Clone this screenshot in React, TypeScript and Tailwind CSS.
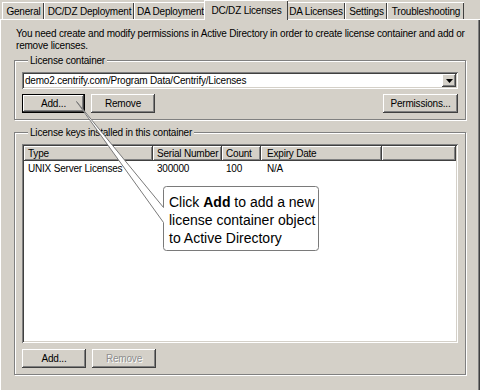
import React from 'react';
import clsx from 'clsx';

const FONT = { fontFamily: '"Liberation Sans", Arial, sans-serif' };

// classic raised 3D edge used by buttons, header cells and the combo arrow
const RAISED =
  'shadow-[inset_-1px_-1px_0_#404040,inset_1px_1px_0_#ffffff,inset_-2px_-2px_0_#808080]';
const SUNKEN =
  'shadow-[inset_1px_1px_0_#808080,inset_-1px_-1px_0_#ffffff,inset_2px_2px_0_#404040,inset_-2px_-2px_0_#d4d0c8]';

const TABS = [
  { label: 'General', w: 'w-[42px]' },
  { label: 'DC/DZ Deployment', w: 'w-[90px]' },
  { label: 'DA Deployment', w: 'w-[72px]' },
  { label: 'DC/DZ Licenses', w: 'w-[84px]', active: true },
  { label: 'DA Licenses', w: 'w-[59px]' },
  { label: 'Settings', w: 'w-[42px]' },
  { label: 'Troubleshooting', w: 'w-[77px]' },
];

const Btn: React.FC<{ children: React.ReactNode; w: string; def?: boolean; disabled?: boolean }> = ({
  children,
  w,
  def,
  disabled,
}) => (
  <div
    className={clsx(
      'flex items-center justify-center h-[19px] bg-[#d4d0c8] whitespace-nowrap',
      w,
      def ? 'border border-black ' + RAISED : RAISED,
      disabled ? 'text-[#8e8e8e] [text-shadow:1px_1px_0_#ffffff]' : 'text-black'
    )}
  >
    {children}
  </div>
);

const Group: React.FC<{ label: string; className?: string; children: React.ReactNode }> = ({
  label,
  className,
  children,
}) => (
  <fieldset
    className={clsx(
      'ml-[13px] w-[452px] border border-[#808080] shadow-[inset_1px_1px_0_#ffffff,1px_1px_0_#ffffff] px-[7px]',
      className
    )}
  >
    <legend className="relative ml-[6px] px-[2px] bg-[#d4d0c8] leading-[13px] whitespace-nowrap">{label}</legend>
    {children}
  </fieldset>
);

const COLS = [
  { label: 'Type', w: 'w-[129px]', pl: 'pl-[4px]' },
  { label: 'Serial Number', w: 'w-[69px]', pl: 'pl-[4px]' },
  { label: 'Count', w: 'w-[39px]', pl: 'pl-[4px]' },
  { label: 'Expiry Date', w: 'w-[121px]', pl: 'pl-[6px]' },
];

export default function App() {
  return (
    <div
      className="relative w-[480px] h-[390px] bg-[#d4d0c8] overflow-hidden text-black text-[10px] tracking-[-0.2px]"
      style={FONT}
    >
      {/* tab strip */}
      <div className="flex items-end h-[19px] pl-[2px]">
        {TABS.map((t) =>
          t.active ? (
            <div
              key={t.label}
              className={clsx(
                'relative z-10 -mx-[2px] -mb-px h-[20px] flex items-start justify-center pt-[3px] bg-[#d4d0c8] border-t border-l border-white shadow-[inset_-1px_0_0_#404040] leading-[13px] whitespace-nowrap',
                t.w
              )}
            >
              {t.label}
            </div>
          ) : (
            <div
              key={t.label}
              className={clsx(
                'h-[17px] flex items-start justify-center pt-[2px] border-t border-l border-white shadow-[inset_-1px_0_0_#404040] leading-[13px] whitespace-nowrap',
                t.w
              )}
            >
              {t.label}
            </div>
          )
        )}
      </div>

      {/* page */}
      <div className="h-[372px] w-[480px] border-t border-l border-white shadow-[inset_-1px_0_0_#404040,inset_-2px_0_0_#808080] pt-[8px]">
        <p className="pl-[15px] leading-[12px] whitespace-nowrap">
          You need create and modify permissions in Active Directory in order to create license container and add or
          <br />
          remove licenses.
        </p>

        <Group label="License container" className="mt-[2px] pt-[5px] pb-[6px]">
          <div className={clsx('relative h-[17px] bg-white flex items-center pl-[3px]', SUNKEN)}>
            <span className="leading-[13px] whitespace-nowrap">demo2.centrify.com/Program Data/Centrify/Licenses</span>
            <div
              className={clsx(
                'absolute right-[2px] top-[2px] w-[14px] h-[13px] bg-[#d4d0c8] flex items-center justify-center',
                RAISED
              )}
            >
              <svg width="7" height="4" viewBox="0 0 7 4">
                <path d="M0 0H7L3.5 4Z" fill="#000" />
              </svg>
            </div>
          </div>
          <div className="flex items-center gap-[6px] mt-[5px]">
            <Btn w="w-[63px]" def>
              Add...
            </Btn>
            <Btn w="w-[64px]">Remove</Btn>
            <div className="flex-1" />
            <Btn w="w-[75px]">Permissions...</Btn>
          </div>
        </Group>

        <Group label="License keys installed in this container" className="mt-[6px] pt-[5px] pb-[6px]">
          <div className={clsx('h-[199px] bg-white p-[2px] flex flex-col', SUNKEN)}>
            <div className="flex h-[15px] shrink-0">
              {COLS.map((c) => (
                <div
                  key={c.label}
                  className={clsx('bg-[#d4d0c8] flex items-center leading-[13px] whitespace-nowrap', c.w, c.pl, RAISED)}
                >
                  {c.label}
                </div>
              ))}
              <div className={clsx('flex-1 bg-[#d4d0c8]', RAISED)} />
            </div>
            <div className="flex h-[13px] mt-[1px] leading-[13px] whitespace-nowrap">
              <div className="w-[129px] pl-[4px]">UNIX Server Licenses</div>
              <div className="w-[69px] pl-[4px]">300000</div>
              <div className="w-[39px] pl-[4px]">100</div>
              <div className="w-[121px] pl-[6px]">N/A</div>
            </div>
          </div>
          <div className="flex items-center gap-[6px] mt-[6px]">
            <Btn w="w-[64px]">Add...</Btn>
            <Btn w="w-[64px]" disabled>
              Remove
            </Btn>
          </div>
        </Group>
      </div>

      {/* callout overlay */}
      <svg className="absolute left-0 top-0 pointer-events-none" width="480" height="390" viewBox="0 0 480 390">
        <path
          d="M166.5 186.5 H315.5 Q318.5 186.5 318.5 189.5 V247.5 Q318.5 250.5 315.5 250.5 H166.5 Q163.5 250.5 163.5 247.5 V222.5 L76.5 101.5 L163.5 207.5 V189.5 Q163.5 186.5 166.5 186.5 Z"
          fill="#ffffff"
          stroke="#7a7a7a"
          strokeWidth="1"
          strokeLinejoin="round"
        />
      </svg>
      <div className="absolute left-[169px] top-[193px] text-[14px] leading-[18px] tracking-normal text-black pointer-events-none whitespace-nowrap">
        Click <b>Add</b> to add a new
        <br />
        license container object
        <br />
        to Active Directory
      </div>
    </div>
  );
}
